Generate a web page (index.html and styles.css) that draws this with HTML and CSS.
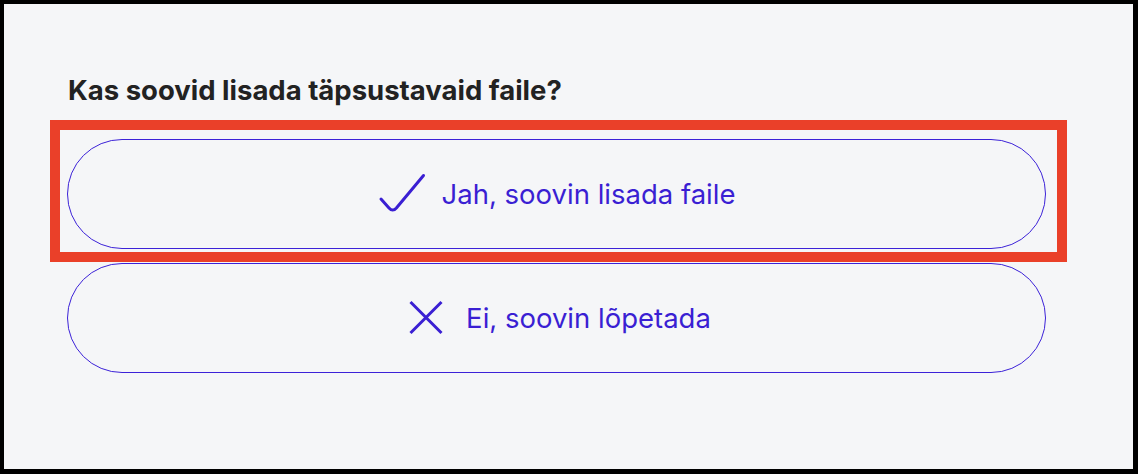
FILE: index.html
```html
<!DOCTYPE html>
<html lang="et">
<head>
<meta charset="utf-8">
<link rel="stylesheet" href="styles.css">
</head>
<body>
<div class="frame">
  <div class="content">
    <h2 class="question">Kas soovid lisada täpsustavaid faile?</h2>
    <div class="options">
      <div class="highlight">
        <button class="option">
          <svg class="icon" viewBox="0 0 48 42" width="48" height="42" aria-hidden="true">
            <path d="M3 26 L11 35 Q14.7 39.2 18.4 35 L45.5 2.5" fill="none" stroke="currentColor" stroke-width="3" stroke-linecap="round" stroke-linejoin="round"/>
          </svg>
          <span>Jah, soovin lisada faile</span>
        </button>
      </div>
      <button class="option">
        <svg class="icon" viewBox="0 0 48 48" width="48" height="48" aria-hidden="true">
          <path d="M8.5 8 L39.5 39 M39.5 8 L8.5 39" fill="none" stroke="currentColor" stroke-width="3"/>
        </svg>
        <span>Ei, soovin lõpetada</span>
      </button>
    </div>
  </div>
</div>
</body>
</html>
```
FILE: styles.css
```css
* { box-sizing: border-box; }
html, body { margin: 0; padding: 0; }
body {
  width: 1138px;
  height: 474px;
  background: #000;
  font-family: Inter, "Liberation Sans", sans-serif;
}
.frame {
  width: 1138px;
  height: 474px;
  border-style: solid;
  border-color: #000;
  border-width: 4px 5px 5px 4px;
  background: #f5f6f8;
}
.content {
  padding: 69px 0 0 46px;
}
.question {
  margin: 0 0 13px 18px;
  font-size: 27.5px;
  line-height: 34px;
  font-weight: 700;
  color: #222;
}
.options {
  display: flex;
  flex-direction: column;
  gap: 1px;
  width: 1017px;
}
.highlight {
  border: 10px solid #ea4029;
  padding: 9px 11px 3px 7px;
}
.option {
  display: flex;
  align-items: center;
  justify-content: center;
  gap: 16px;
  width: 979px;
  height: 110px;
  border: 1px solid #3c22d8;
  border-radius: 55px;
  background: transparent;
  color: #3a1fd3;
  font-family: inherit;
  font-size: 27.5px;
  font-weight: 400;
  padding: 0;
  cursor: pointer;
}
.options > .option { margin-left: 17px; }
.icon { display: block; flex: none; }
```
